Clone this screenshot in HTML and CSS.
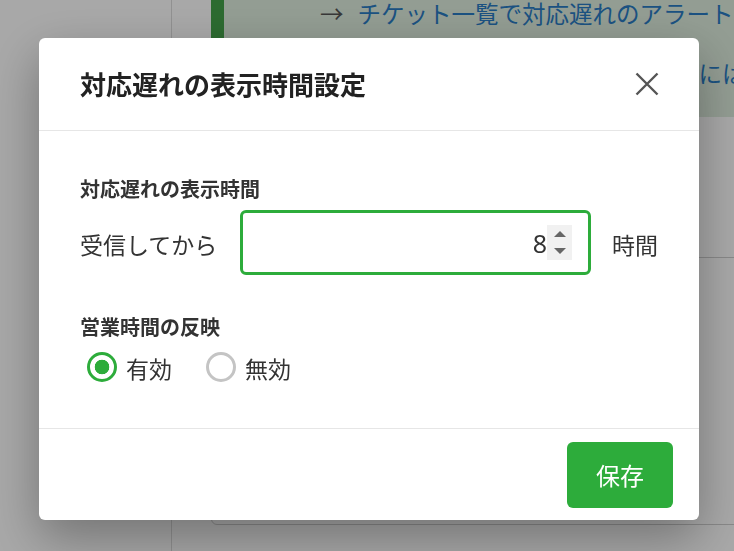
FILE: index.html
```html
<!DOCTYPE html>
<html lang="ja">
<head>
<meta charset="utf-8">
<title>対応遅れの表示時間設定</title>
<link rel="stylesheet" href="styles.css">
</head>
<body>
<div class="page">
  <aside class="sidebar"></aside>
  <main class="main">
    <div class="alert">
      <p class="alert-line"><span class="arrow">→</span><a class="alert-link">チケット一覧で対応遅れのアラート</a></p>
      <p class="alert-line alert-line2"><a class="alert-link">表示されるまでの時間を変更するには</a></p>
    </div>
    <div class="card"></div>
  </main>
</div>
<div class="backdrop"></div>
<div class="modal" role="dialog" aria-labelledby="modal-title">
  <header class="modal-header">
    <h1 id="modal-title" class="modal-title">対応遅れの表示時間設定</h1>
    <button class="close" aria-label="閉じる">
      <svg width="24" height="24" viewBox="0 0 24 24"><path d="M1.5 1.5 L22.5 22.5 M22.5 1.5 L1.5 22.5" stroke="#555" stroke-width="2.4" fill="none"/></svg>
    </button>
  </header>
  <section class="modal-body">
    <h2 class="field-label">対応遅れの表示時間</h2>
    <div class="hours-row">
      <span class="row-text lead">受信してから</span>
      <div class="num">
        <input class="num-input" type="text" value="8">
        <span class="spin"><span class="up"></span><span class="down"></span></span>
      </div>
      <span class="row-text unit">時間</span>
    </div>
    <h2 class="field-label second">営業時間の反映</h2>
    <div class="radios">
      <label class="radio"><input type="radio" name="biz" checked><span>有効</span></label>
      <label class="radio off"><input type="radio" name="biz"><span>無効</span></label>
    </div>
  </section>
  <footer class="modal-footer">
    <button class="save">保存</button>
  </footer>
</div>
</body>
</html>
```

FILE: styles.css
```css
* { box-sizing: border-box; }
html, body {
  margin: 0;
  width: 734px;
  height: 551px;
  overflow: hidden;
  background: #fff;
  font-family: "Noto Sans CJK JP", "Noto Sans", sans-serif;
  color: #333;
}
.page {
  display: flex;
  height: 551px;
}
.sidebar {
  width: 172px;
  flex: none;
  border-right: 1px solid #dcdcdc;
  background: #fff;
}
.main {
  flex: 1;
  padding-left: 39px;
  min-width: 0;
}
.alert {
  height: 117px;
  width: 600px;
  background: #dfeedf;
  border-left: 13px solid #44a34a;
  padding-left: 96px;
  overflow: hidden;
}
.alert-line {
  margin: 0;
  margin-top: -2px;
  font-size: 23.5px;
  line-height: 30px;
  white-space: nowrap;
}
.alert-line2 {
  margin-top: 30px;
  padding-left: 26px;
}
.arrow {
  color: #555;
  margin-right: 14px;
}
.alert-link {
  color: #2a7cc4;
}
.card {
  margin-top: 140px;
  height: 268px;
  width: 600px;
  border: 1px solid #cfcfcf;
  border-radius: 6px;
}
.backdrop {
  position: fixed;
  inset: 0;
  background: rgba(0, 0, 0, 0.34);
}
.modal {
  position: fixed;
  left: 39px;
  top: 38px;
  width: 660px;
  background: #fff;
  border-radius: 6px;
  box-shadow: 0 18px 50px rgba(0, 0, 0, 0.32);
}
.modal-header {
  height: 93px;
  border-bottom: 1px solid #e6e6e6;
  display: flex;
  align-items: center;
  justify-content: space-between;
  padding: 0 40px 0 41px;
}
.modal-title {
  margin: 0;
  font-size: 26px;
  font-weight: 700;
  color: #222;
  line-height: 36px;
}
.close {
  border: none;
  background: none;
  padding: 0;
  width: 24px;
  height: 24px;
  display: flex;
}
.modal-body {
  padding: 44px 41px 46px 41px;
}
.field-label {
  margin: 0 0 7px;
  font-size: 20px;
  font-weight: 700;
  line-height: 28px;
  color: #333;
}
.field-label.second {
  margin-top: 38px;
  margin-bottom: 11px;
}
.hours-row {
  display: flex;
  align-items: center;
  height: 65px;
}
.row-text {
  flex: none;
  white-space: nowrap;
  font-size: 23px;
  line-height: 30px;
  color: #333;
  padding-top: 3px;
}
.row-text.lead { margin-right: 23px; }
.row-text.unit { margin-left: 21px; }
.num {
  flex: 1;
  min-width: 0;
  height: 65px;
  border: 3px solid #2dac3b;
  border-radius: 6px;
  display: flex;
  align-items: center;
  padding-right: 16px;
}
.num-input {
  flex: 1;
  min-width: 0;
  border: none;
  outline: none;
  background: transparent;
  text-align: right;
  font-family: "Noto Sans", sans-serif;
  font-size: 25px;
  color: #333;
  padding: 0;
  height: 40px;
}
.spin {
  width: 25px;
  height: 35px;
  flex: none;
  background: #f1f1f1;
  display: flex;
  flex-direction: column;
  align-items: center;
  justify-content: center;
  gap: 11px;
}
.up {
  width: 0;
  height: 0;
  border-left: 6px solid transparent;
  border-right: 6px solid transparent;
  border-bottom: 6px solid #666;
}
.down {
  width: 0;
  height: 0;
  border-left: 6px solid transparent;
  border-right: 6px solid transparent;
  border-top: 6px solid #666;
}
.radios {
  display: flex;
  align-items: center;
  height: 30px;
  padding-left: 7px;
  gap: 34px;
}
.radio {
  display: flex;
  align-items: center;
  gap: 9px;
  font-size: 23px;
  line-height: 30px;
  color: #333;
}
.radio input {
  appearance: none;
  -webkit-appearance: none;
  margin: 0;
  width: 30px;
  height: 30px;
  border-radius: 50%;
  border: 3px solid #2dac3b;
  background: radial-gradient(circle, #2dac3b 0 7px, #fff 7.6px);
}
.radio.off input {
  border-color: #c4c4c4;
  background: #fff;
}
.radio span {
  padding-top: 2px;
}
.modal-footer {
  border-top: 1px solid #e6e6e6;
  display: flex;
  justify-content: flex-end;
  padding: 13px 26px 12px;
}
.save {
  height: 66px;
  padding: 0 29px;
  border: none;
  border-radius: 6px;
  background: #2dac3b;
  color: #fff;
  font-family: "Noto Sans CJK JP", sans-serif;
  font-size: 24px;
  line-height: 1;
}
```
